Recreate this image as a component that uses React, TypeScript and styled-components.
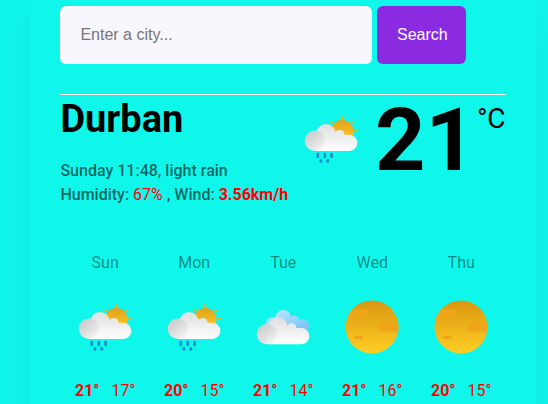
import React from "react";
import styled, { createGlobalStyle } from "styled-components";

const GlobalStyle = createGlobalStyle`
  *, *::before, *::after { box-sizing: border-box; }
  body {
    margin: 0;
    background: #0ff7eb;
    font-family: Roboto, "Liberation Sans", sans-serif;
  }
`;

const Page = styled.div`
  height: 404px;
  overflow: hidden;
`;

const Card = styled.main`
  width: 506px;
  height: 560px;
  margin: -24px 0 0 30.4px;
  padding: 30px;
  background: #0ff7eb;
  box-shadow: 0 30px 50px rgba(65, 50, 100, 0.08);
`;

const SearchForm = styled.form`
  display: flex;
  gap: 5px;
  padding-bottom: 30px;
  border-bottom: 1px solid #fff;
`;

const SearchInput = styled.input`
  width: 312px;
  height: 58px;
  padding: 0 20px;
  border: 0;
  border-radius: 6px;
  background: #f8f7fe;
  font: 16px "Liberation Sans", Arial, sans-serif;
  &::placeholder { color: #757575; }
`;

const SearchButton = styled.button`
  width: 89px;
  height: 58px;
  padding: 0 0 0 1px;
  border: 0;
  border-radius: 6px;
  background: #8a2be2;
  color: #fff;
  font: 16px "Liberation Sans", Arial, sans-serif;
`;

const Current = styled.section`
  display: flex;
  justify-content: space-between;
  height: 156px;
`;

const City = styled.h1`
  margin: 0 0 17px;
  padding-top: 1px;
  font-size: 38px;
  line-height: 46px;
  font-weight: 700;
`;

const Details = styled.p`
  margin: 0;
  font-size: 16px;
  line-height: 24px;
  font-weight: 500;
  color: rgba(0, 0, 0, 0.6);
  white-space: nowrap;
`;

const Value = styled.span<{ $bold?: boolean }>`
  color: #f00;
  font-weight: ${(p) => (p.$bold ? 700 : 400)};
`;

const Reading = styled.div`
  display: flex;
  align-items: flex-start;
  padding-right: 0.8px;
`;

const ReadingIcon = styled.div`
  margin: 14px 14px 0 0;
`;

const Degrees = styled.div`
  padding-top: 1px;
  font-size: 88px;
  line-height: 88px;
  font-weight: 700;
`;

const Unit = styled.div`
  margin: 7px 0 0 0;
  padding-left: 1px;
  font-size: 28px;
  line-height: 34px;
`;

const Forecast = styled.section`
  display: grid;
  grid-template-columns: repeat(5, 89px);
`;

const Day = styled.div`
  display: flex;
  flex-direction: column;
  align-items: center;
`;

const DayName = styled.div`
  padding-left: 0.6px;
  font-size: 16px;
  line-height: 24px;
  color: rgba(0, 0, 0, 0.45);
`;

const DayIcon = styled.div`
  margin: 22px 0;
`;

const Temps = styled.div`
  display: flex;
  gap: 12px;
  padding-left: 0.8px;
  font-size: 16px;
  line-height: 24px;
  color: #f00;
`;

const High = styled.strong`
  font-weight: 700;
`;

const Svg = styled.svg`
  display: block;
  width: 60px;
  height: 60px;
`;

type Condition = "rain" | "clouds" | "clear";

const WhiteCloud = ({ id }: { id: string }) => (
  <g>
    <g fill={`url(#${id}-cloud)`}>
      <circle cx="25" cy="24.8" r="9.7" />
      <circle cx="38.6" cy="25.8" r="4.9" />
      <path d="M14 42h34.2a8.15 8.15 0 0 0 0-16.3H25L14 32z" />
    </g>
    <circle cx="13.9" cy="31.8" r="10.2" fill={`url(#${id}-puff)`} />
  </g>
);

const WeatherIcon = ({ kind, id }: { kind: Condition; id: string }) => (
  <Svg viewBox="0 0 60 60">
    <defs>
      <linearGradient id={`${id}-cloud`} gradientUnits="userSpaceOnUse" x1="0" y1="15" x2="0" y2="42">
        <stop stopColor="#dedede" />
        <stop offset="1" stopColor="#fff" />
      </linearGradient>
      <linearGradient id={`${id}-puff`} x1="0.2" y1="0.2" x2="0.8" y2="0.95">
        <stop stopColor="#cfcfcf" />
        <stop offset="0.5" stopColor="#dfdfdf" />
        <stop offset="1" stopColor="#f6f6f6" />
      </linearGradient>
      <linearGradient id={`${id}-sun`} x1="0" y1="0" x2="0" y2="1">
        <stop stopColor="#d8960f" />
        <stop offset="1" stopColor="#ffcf25" />
      </linearGradient>
      <linearGradient id={`${id}-smallsun`} x1="0" y1="0" x2="0" y2="1">
        <stop stopColor="#e1a11b" />
        <stop offset="1" stopColor="#ffce26" />
      </linearGradient>
      <linearGradient id={`${id}-sky`} gradientUnits="userSpaceOnUse" x1="26" y1="13" x2="36" y2="37">
        <stop stopColor="#b8e6ff" />
        <stop offset="1" stopColor="#7cc4f7" />
      </linearGradient>
      <clipPath id={`${id}-disc`}>
        <circle cx="30" cy="30" r="26.5" />
      </clipPath>
    </defs>
    {kind === "rain" && (
      <>
        <circle cx="41.2" cy="22.3" r="11.3" fill={`url(#${id}-smallsun)`} />
        <path
          d="M41.2 7.3v3M50.7 14.3l2-2M53.4 21.8h3.4M31.7 14.3l-2-2"
          stroke="#eab020"
          strokeWidth="1.9"
        />
        <WhiteCloud id={id} />
        <g fill="#2490d0">
          <rect x="15.4" y="43.7" width="2.8" height="5.4" rx="1.2" />
          <rect x="22.4" y="43.7" width="2.8" height="5.4" rx="1.2" />
          <rect x="29.2" y="43.7" width="2.8" height="5.4" rx="1.2" />
          <rect x="18.5" y="50" width="2.8" height="3.8" rx="1.3" />
          <rect x="25.4" y="50" width="2.8" height="3.8" rx="1.3" />
        </g>
      </>
    )}
    {kind === "clouds" && (
      <>
        <g fill={`url(#${id}-sky)`}>
          <circle cx="30.3" cy="21.2" r="8.2" />
          <circle cx="20.5" cy="28" r="8" />
          <circle cx="41.6" cy="22.6" r="4" />
          <path d="M20 36.5h29.5a7.1 7.1 0 0 0 0-14.2H24z" />
        </g>
        <g transform="translate(0 5.3)">
          <WhiteCloud id={id} />
        </g>
      </>
    )}
    {kind === "clear" && (
      <>
        <circle cx="30" cy="30" r="26.5" fill={`url(#${id}-sun)`} />
        <g fill="#f0a418" clipPath={`url(#${id}-disc)`}>
          <rect x="0" y="12" width="26" height="9" rx="4.2" />
          <rect x="36" y="25.8" width="28" height="8.4" rx="4.2" />
          <rect x="12" y="39" width="8.8" height="3" rx="1.5" />
        </g>
      </>
    )}
  </Svg>
);

const days: { name: string; kind: Condition; high: number; low: number }[] = [
  { name: "Sun", kind: "rain", high: 21, low: 17 },
  { name: "Mon", kind: "rain", high: 20, low: 15 },
  { name: "Tue", kind: "clouds", high: 21, low: 14 },
  { name: "Wed", kind: "clear", high: 21, low: 16 },
  { name: "Thu", kind: "clear", high: 20, low: 15 },
];

export default function App() {
  return (
    <Page>
      <GlobalStyle />
      <Card>
        <SearchForm onSubmit={(e) => e.preventDefault()}>
          <SearchInput type="search" placeholder="Enter a city..." />
          <SearchButton type="submit">Search</SearchButton>
        </SearchForm>
        <Current>
          <div>
            <City>Durban</City>
            <Details>Sunday 11:48, light rain</Details>
            <Details>
              Humidity: <Value>67%</Value> , Wind: <Value $bold>3.56km/h</Value>
            </Details>
          </div>
          <Reading>
            <ReadingIcon>
              <WeatherIcon kind="rain" id="now" />
            </ReadingIcon>
            <Degrees>21</Degrees>
            <Unit>°C</Unit>
          </Reading>
        </Current>
        <Forecast>
          {days.map((d) => (
            <Day key={d.name}>
              <DayName>{d.name}</DayName>
              <DayIcon>
                <WeatherIcon kind={d.kind} id={d.name} />
              </DayIcon>
              <Temps>
                <High>{d.high}°</High>
                <span>{d.low}°</span>
              </Temps>
            </Day>
          ))}
        </Forecast>
      </Card>
    </Page>
  );
}
